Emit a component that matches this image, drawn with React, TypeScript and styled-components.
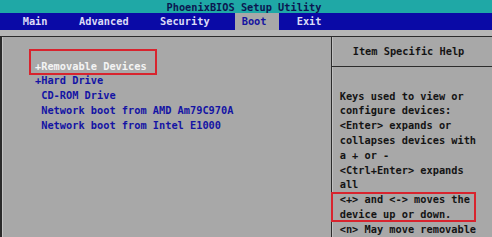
import React from "react";
import styled, { createGlobalStyle } from "styled-components";

const GlobalStyle = createGlobalStyle`
  html, body {
    margin: 0;
    padding: 0;
    background: #a8a8a8;
  }
  body {
    font-family: "DejaVu Sans Mono", "Liberation Mono", monospace;
  }
`;

const FONT_SIZE = "10.3px";
const LINE = "14.8px";

type MenuEntry = { label: string; left: number; active?: boolean };

const menu: MenuEntry[] = [
  { label: "Main", left: 22.7 },
  { label: "Advanced", left: 31.5 },
  { label: "Security", left: 31.4 },
  { label: "Boot", left: 25.4, active: true },
  { label: "Exit", left: 17.7 },
];

const devices = [
  { text: "+Removable Devices", selected: true },
  { text: "+Hard Drive" },
  { text: " CD-ROM Drive" },
  { text: " Network boot from AMD Am79C970A" },
  { text: " Network boot from Intel E1000" },
];

const help = [
  "Keys used to view or",
  "configure devices:",
  "<Enter> expands or",
  "collapses devices with",
  "a + or -",
  "<Ctrl+Enter> expands",
  "all",
  "<+> and <-> moves the",
  "device up or down.",
  "<n> May move removable",
];

export default function App() {
  return (
    <Screen>
      <GlobalStyle />
      <TitleBar>PhoenixBIOS Setup Utility</TitleBar>
      <MenuBar>
        {menu.map((m) => (
          <MenuItem key={m.label} $left={m.left} $active={m.active}>
            {m.label}
          </MenuItem>
        ))}
      </MenuBar>
      <Stripe />
      <Frame>
        <LeftPanel>
          {devices.map((d) => (
            <Device key={d.text} $selected={d.selected}>
              {d.text}
            </Device>
          ))}
        </LeftPanel>
        <RightPanel>
          <HelpHeader>Item Specific Help</HelpHeader>
          <HelpBody>
            {help.map((line) => (
              <HelpLine key={line}>{line}</HelpLine>
            ))}
          </HelpBody>
        </RightPanel>
      </Frame>
      <Marker $x={29} $y={49} $w={128} $h={26} />
      <Marker $x={331} $y={192} $w={145} $h={30} />
    </Screen>
  );
}

const Screen = styled.div`
  position: relative;
  width: 492px;
  height: 237px;
  overflow: hidden;
  background: #a8a8a8;
  font-family: "DejaVu Sans Mono", "Liberation Mono", monospace;
  font-size: ${FONT_SIZE};
  font-weight: bold;
  display: flex;
  flex-direction: column;
`;

const TitleBar = styled.div`
  height: 13px;
  line-height: 14px;
  background: #1fa8a6;
  color: #0b1650;
  text-align: center;
  padding-right: 4px;
  white-space: pre;
`;

const MenuBar = styled.div`
  height: 17px;
  background: #0a0aa6;
  display: flex;
  align-items: stretch;
`;

const MenuItem = styled.div<{ $left: number; $active?: boolean }>`
  margin-left: ${({ $left }) => $left}px;
  padding: ${({ $active }) => ($active ? "0 12.5px 0 6.7px" : "0")};
  background: ${({ $active }) => ($active ? "#a8a8a8" : "transparent")};
  color: ${({ $active }) => ($active ? "#1414a0" : "#dcdcf6")};
  line-height: 16px;
  white-space: pre;
`;

const Stripe = styled.div`
  height: 6px;
  background: #b6b6b6;
`;

const Frame = styled.div`
  flex: 1;
  display: flex;
  border-top: 1px solid #2c2c2c;
  border-left: 2px solid #2a2a2a;
  box-shadow: inset 1px 0 0 #c4c4c4;
`;

const LeftPanel = styled.div`
  width: 330px;
  border-right: 1px solid #2c2c2c;
  padding: 21.6px 0 0 33px;
  box-sizing: border-box;
`;

const Device = styled.div<{ $selected?: boolean }>`
  line-height: ${LINE};
  white-space: pre;
  color: ${({ $selected }) => ($selected ? "#f4f4f4" : "#1414a4")};
`;

const RightPanel = styled.div`
  flex: 1;
  display: flex;
  flex-direction: column;
  box-shadow: inset 1px 0 0 #c0c0c0;
`;

const HelpHeader = styled.div`
  height: 29px;
  line-height: 29px;
  border-bottom: 1px solid #2c2c2c;
  text-align: center;
  padding-right: 7px;
  color: #141414;
  white-space: pre;
`;

const HelpBody = styled.div`
  padding: 21.6px 0 0 7.7px;
`;

const HelpLine = styled.div`
  line-height: ${LINE};
  white-space: pre;
  color: #141414;
`;

const Marker = styled.div<{ $x: number; $y: number; $w: number; $h: number }>`
  position: absolute;
  left: ${({ $x }) => $x}px;
  top: ${({ $y }) => $y}px;
  width: ${({ $w }) => $w}px;
  height: ${({ $h }) => $h}px;
  box-sizing: border-box;
  border: 2px solid #d8242e;
  pointer-events: none;
`;
